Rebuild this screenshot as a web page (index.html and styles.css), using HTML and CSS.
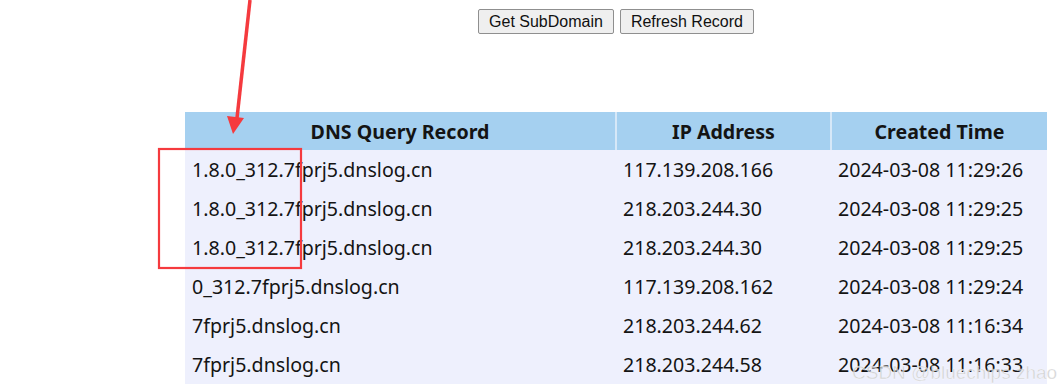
FILE: index.html
```html
<!DOCTYPE html>
<html lang="en">
<head>
  <meta charset="UTF-8">
  <title>DNSLog</title>
  <link rel="stylesheet" href="styles.css">
</head>
<body>
  <div class="page">
    <div class="actions">
      <button type="button">Get SubDomain</button>
      <button type="button">Refresh Record</button>
    </div>

    <table class="records">
      <thead>
        <tr>
          <th class="col-domain">DNS Query Record</th>
          <th class="col-ip">IP Address</th>
          <th class="col-time">Created Time</th>
        </tr>
      </thead>
      <tbody>
        <tr><td>1.8.0_312.7fprj5.dnslog.cn</td><td>117.139.208.166</td><td>2024-03-08 11:29:26</td></tr>
        <tr><td>1.8.0_312.7fprj5.dnslog.cn</td><td>218.203.244.30</td><td>2024-03-08 11:29:25</td></tr>
        <tr><td>1.8.0_312.7fprj5.dnslog.cn</td><td>218.203.244.30</td><td>2024-03-08 11:29:25</td></tr>
        <tr><td>0_312.7fprj5.dnslog.cn</td><td>117.139.208.162</td><td>2024-03-08 11:29:24</td></tr>
        <tr><td>7fprj5.dnslog.cn</td><td>218.203.244.62</td><td>2024-03-08 11:16:34</td></tr>
        <tr><td>7fprj5.dnslog.cn</td><td>218.203.244.58</td><td>2024-03-08 11:16:33</td></tr>
      </tbody>
    </table>
  </div>

  <!-- annotation drawn over the screenshot -->
  <svg class="markup" width="1063" height="389" viewBox="0 0 1063 389">
    <line x1="250" y1="0" x2="237" y2="118" stroke="#f53a3e" stroke-width="3.5"/>
    <polygon points="227,116 244,118 233,134" fill="#f53a3e"/>
    <rect x="159" y="149" width="142" height="119" fill="none" stroke="#f53a3e" stroke-width="2.2"/>
  </svg>

  <div class="watermark">CSDN @bluechips zhao</div>
</body>
</html>
```

FILE: styles.css
```css
body {
  margin: 0;
  background: #fff;
  font-family: "Noto Sans", "Open Sans", sans-serif;
  overflow: hidden;
  height: 389px;
}
.page {
  margin-left: 185px;
  width: 862px;
}
.actions {
  display: flex;
  justify-content: center;
  gap: 6px;
  padding-top: 9px;
  margin-bottom: 78px;
}
.actions button {
  font-family: "Liberation Sans", Arial, sans-serif;
  font-size: 16px;
  height: 25px;
  padding: 0 10px;
  background: #efefef;
  color: #111;
  border: 1px solid #8f8f8f;
  border-radius: 2px;
}
.records {
  width: 862px;
  border-collapse: collapse;
  table-layout: fixed;
  font-size: 19.6px;
  color: #141414;
}
.records th {
  height: 38px;
  padding: 0;
  background: #a5d0f0;
  font-weight: bold;
  text-align: center;
  border-left: 2px solid #d6e8f8;
}
.records th:first-child {
  border-left: none;
}
.col-domain { width: 430px; }
.col-ip { width: 213px; }
.records tbody td {
  height: 39px;
  padding: 0 0 0 7px;
  background: #eef0fd;
  white-space: nowrap;
}
.markup {
  position: absolute;
  left: 0;
  top: 0;
}
.watermark {
  position: absolute;
  left: 852px;
  top: 362px;
  font-family: "Liberation Sans", Arial, sans-serif;
  font-size: 19px;
  color: rgba(200, 200, 200, 0.75);
  -webkit-text-stroke: 0.4px rgba(255, 255, 255, 0.8);
  white-space: nowrap;
}
```
